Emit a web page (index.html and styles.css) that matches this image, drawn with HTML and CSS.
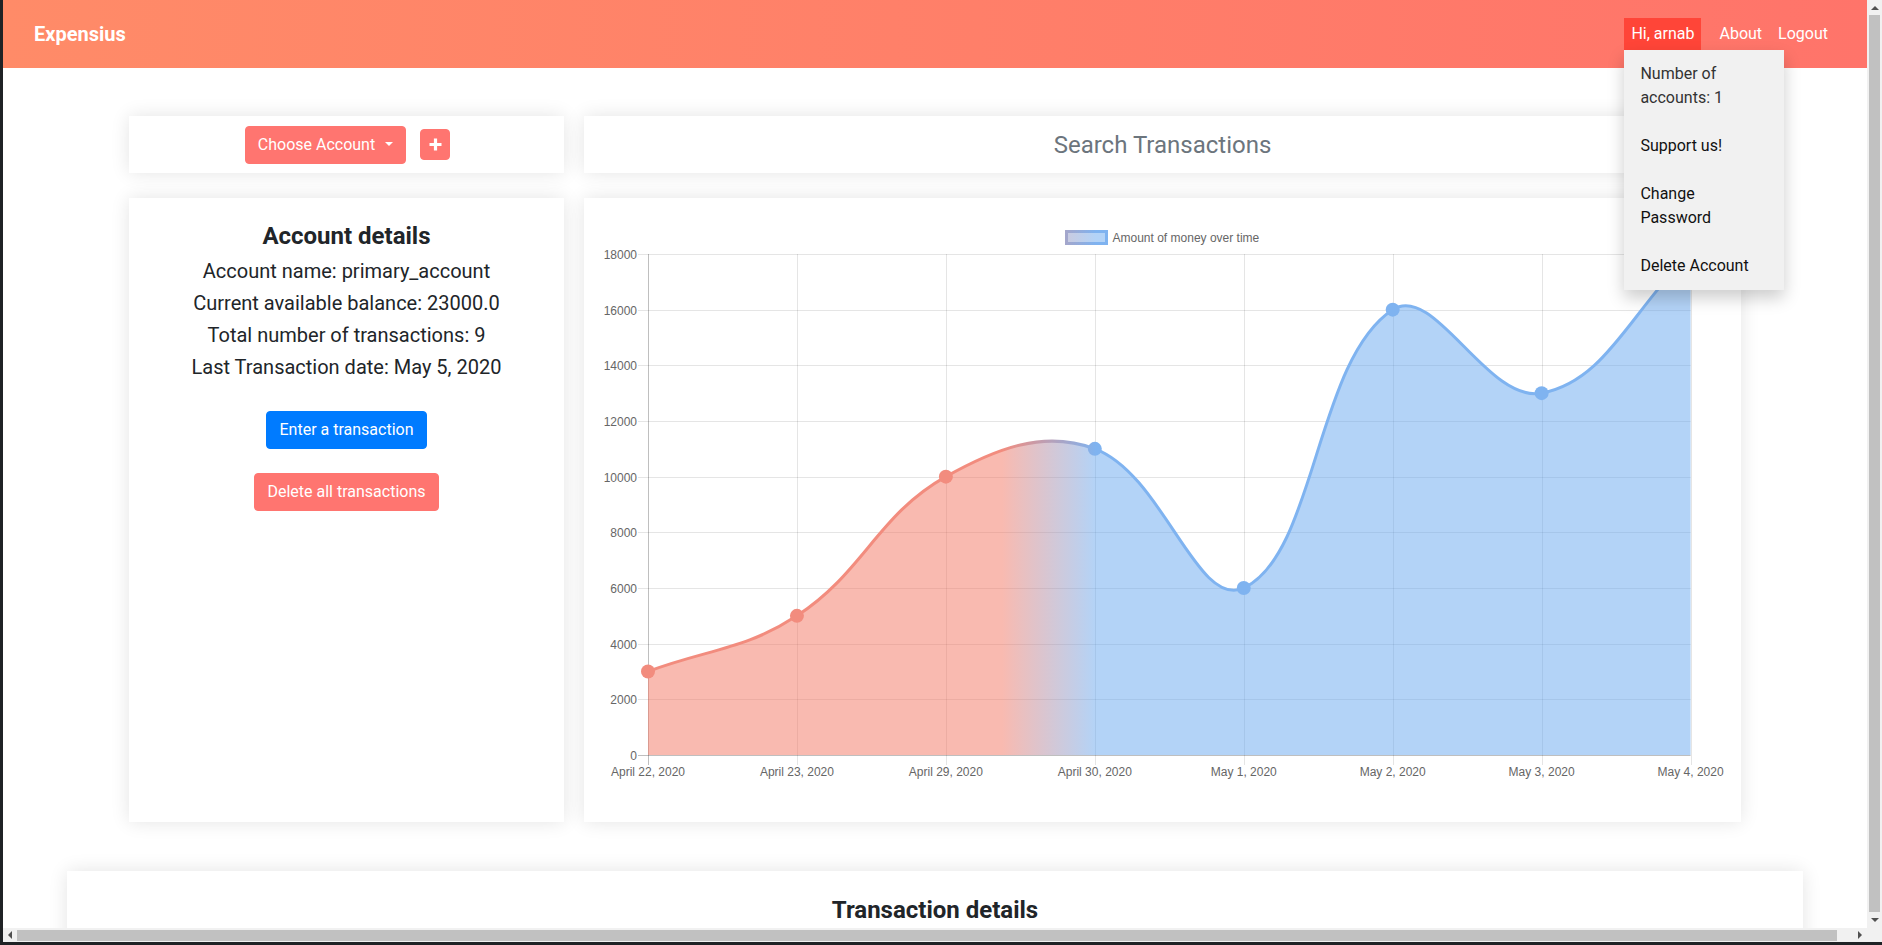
FILE: index.html
```html
<!DOCTYPE html>
<html lang="en">
<head>
<meta charset="utf-8">
<title>Expensius</title>
<link rel="stylesheet" href="styles.css">
</head>
<body>
<div class="page">
  <nav class="navbar">
    <a class="brand">Expensius</a>
    <ul class="nav">
      <li class="nav-item user">
        <a class="nav-link">Hi, arnab</a>
        <div class="menu">
          <a class="menu-item muted">Number of<br>accounts: 1</a>
          <a class="menu-item">Support us!</a>
          <a class="menu-item">Change<br>Password</a>
          <a class="menu-item">Delete Account</a>
        </div>
      </li>
      <li class="nav-item"><a class="nav-link">About</a></li>
      <li class="nav-item"><a class="nav-link">Logout</a></li>
    </ul>
  </nav>

  <main class="dashboard">
    <section class="card picker">
      <button class="btn btn-salmon">Choose Account<span class="caret"></span></button>
      <button class="btn btn-salmon btn-plus" aria-label="Add account">
        <svg width="13" height="13" viewBox="0 0 13 13"><path d="M6.5 0.5v12M0.5 6.5h12" stroke="#fff" stroke-width="3.2" fill="none"/></svg>
      </button>
    </section>

    <section class="card search">
      <input class="search-input" type="text" placeholder="Search Transactions">
    </section>

    <section class="card details">
      <h4 class="title">Account details</h4>
      <h5 class="line">Account name: primary_account</h5>
      <h5 class="line">Current available balance: 23000.0</h5>
      <h5 class="line">Total number of transactions: 9</h5>
      <h5 class="line">Last Transaction date: May 5, 2020</h5>
      <div class="actions">
        <button class="btn btn-primary">Enter a transaction</button>
        <button class="btn btn-salmon">Delete all transactions</button>
      </div>
    </section>

    <section class="card chart-card">
      <svg id="chart" class="chart" width="1157" height="624" viewBox="0 0 1157 624">
        <defs>
          <linearGradient id="fillGrad" gradientUnits="userSpaceOnUse" x1="418" y1="0" x2="512" y2="0">
            <stop offset="0" stop-color="#f37561" stop-opacity="0.5"/>
            <stop offset="1" stop-color="#67a7ef" stop-opacity="0.5"/>
          </linearGradient>
          <linearGradient id="lineGrad" gradientUnits="userSpaceOnUse" x1="418" y1="0" x2="512" y2="0">
            <stop offset="0" stop-color="#f28c7e"/>
            <stop offset="1" stop-color="#7fb3f0"/>
          </linearGradient>
        </defs>
        <g class="legend">
          <rect x="482.5" y="33.5" width="40" height="12" fill="url(#fillGrad)" stroke="url(#lineGrad)" stroke-width="3"/>
          <text x="528.5" y="43.5">Amount of money over time</text>
        </g>
        <g id="grid" class="grid"></g>
        <g id="axes" class="axes"></g>
        <path id="area" fill="url(#fillGrad)"/>
        <path id="line" fill="none" stroke="url(#lineGrad)" stroke-width="3"/>
        <g id="points" fill="url(#lineGrad)"></g>
        <g id="yLabels" text-anchor="end"></g>
        <g id="xLabels" text-anchor="middle"></g>
      </svg>
    </section>
  </main>

  <section class="card transactions">
    <h4 class="title">Transaction details</h4>
  </section>
</div>

<div class="vscroll">
  <div class="sb-btn"><span class="arrow arrow-up"></span></div>
  <div class="sb-track"><div class="sb-thumb"></div></div>
  <div class="sb-btn"><span class="arrow arrow-down"></span></div>
</div>
<div class="hscroll">
  <div class="sb-btn"><span class="arrow arrow-left"></span></div>
  <div class="sb-track"><div class="sb-thumb"></div></div>
  <div class="sb-btn"><span class="arrow arrow-right"></span></div>
</div>
<div class="sb-corner"></div>

<script src="script.js"></script>
</body>
</html>
```

FILE: styles.css
```css
* { box-sizing: border-box; }

html { height: 100%; overflow: hidden; background: #1f2225; }

body {
  margin: 0;
  height: 945px;
  overflow: hidden;
  display: grid;
  grid-template-columns: 3px 1864px 15px;
  grid-template-rows: 928px 14px 3px;
  background: #1f2225;
  font-family: Roboto, "Liberation Sans", Arial, sans-serif;
  font-size: 16px;
  line-height: 1.5;
  color: #212529;
}

.page {
  grid-column: 2;
  grid-row: 1;
  background: #fff;
  overflow: hidden;
}

/* ---------- navbar ---------- */
.navbar {
  display: flex;
  align-items: center;
  justify-content: space-between;
  height: 68px;
  padding: 0 31px;
  background: linear-gradient(to right, #ff8b68, #ff746a);
  position: relative;
  z-index: 5;
}

.brand {
  color: #fff;
  font-weight: 700;
  font-size: 20px;
  line-height: 30px;
}

.nav {
  display: flex;
  align-items: center;
  list-style: none;
  margin: 0;
  padding: 0;
}

.nav-link {
  display: block;
  padding: 4px 8px;
  line-height: 24px;
  color: #fff;
}

.user {
  position: relative;
  margin-right: 10px;
}

.user .nav-link {
  background: #ff4538;
  padding: 4px 7px;
}

.menu {
  position: absolute;
  top: 100%;
  left: 0;
  width: 160px;
  background: #f1f1f1;
  box-shadow: 0 8px 16px rgba(0, 0, 0, 0.2);
  z-index: 10;
}

.menu-item {
  display: block;
  padding: 12px 16px;
  line-height: 24px;
  color: #111;
}

.menu-item.muted { color: #333; }

/* ---------- cards ---------- */
.card {
  background: #fff;
  box-shadow: 0 0 18px rgba(0, 0, 0, 0.11);
}

.dashboard {
  display: grid;
  grid-template-columns: 435px 1157px;
  grid-template-rows: 57px 624px;
  gap: 25px 20px;
  width: 1612px;
  margin: 48px auto 0;
}

.picker {
  display: flex;
  align-items: center;
  justify-content: center;
  gap: 14px;
  padding-left: 2px;
}

.btn {
  font-family: inherit;
  font-size: 16px;
  line-height: 24px;
  padding: 6px 12px;
  border: 1px solid transparent;
  border-radius: 4px;
  color: #fff;
  cursor: pointer;
  display: inline-flex;
  align-items: center;
}

.btn-salmon { background: #ff7570; border-color: #ff7570; }
.btn-primary { background: #007bff; border-color: #007bff; }

.caret {
  display: inline-block;
  margin-left: 10px;
  border-top: 4.5px solid #fff;
  border-left: 4px solid transparent;
  border-right: 4px solid transparent;
  margin-top: -2px;
}

.btn-plus {
  width: 30px;
  height: 31px;
  padding: 0;
  justify-content: center;
}

.btn-plus svg { display: block; }

.search {
  display: flex;
  align-items: center;
}

.search-input {
  width: 100%;
  height: 57px;
  border: 0;
  padding: 0;
  background: transparent;
  font-family: inherit;
  font-size: 24px;
  text-align: center;
  color: #495057;
  outline: none;
}

.search-input::placeholder { color: #6c757d; opacity: 1; }

.details {
  text-align: center;
  padding: 24px 20px;
}

.title {
  margin: 0 0 8px;
  font-size: 24px;
  font-weight: 700;
  line-height: 1.2;
  color: #212529;
}

.line {
  margin: 0 0 8px;
  font-size: 20px;
  font-weight: 400;
  line-height: 1.2;
}

.actions {
  display: flex;
  flex-direction: column;
  align-items: center;
  gap: 24px;
  margin-top: 32px;
}

.chart-card { overflow: hidden; }

.chart { display: block; }

.chart text {
  font-family: "Liberation Sans", Arial, Helvetica, sans-serif;
  font-size: 12px;
  fill: #666;
}

.grid line { stroke: rgba(0, 0, 0, 0.1); stroke-width: 1; }
.axes line { stroke: rgba(0, 0, 0, 0.25); stroke-width: 1; }

.transactions {
  width: 1736px;
  min-height: 300px;
  margin: 49px auto 0;
  padding-top: 25px;
  text-align: center;
}

/* ---------- window scrollbars ---------- */
.vscroll, .hscroll {
  display: flex;
  background: #f1f1f1;
}

.vscroll { grid-column: 3; grid-row: 1; flex-direction: column; }
.hscroll { grid-column: 2; grid-row: 2; flex-direction: row; }

.sb-corner { grid-column: 3; grid-row: 2; background: #f1f1f1; }

.sb-btn {
  flex: 0 0 15px;
  display: flex;
  align-items: center;
  justify-content: center;
}

.vscroll .sb-btn:last-child { flex-basis: 16px; }
.hscroll .sb-btn:first-child { flex-basis: 14px; }

.sb-track { flex: 1; display: flex; }

.vscroll .sb-track { padding: 0 2px; }
.vscroll .sb-thumb { flex: 1; background: #c1c1c1; }

.hscroll .sb-track { padding: 2px 15px 1px 0; }
.hscroll .sb-thumb { flex: 1; background: #c1c1c1; }

.arrow { width: 0; height: 0; border: 4px solid transparent; }
.arrow-up { border-bottom-color: #505050; border-top-width: 0; }
.arrow-down { border-top-color: #505050; border-bottom-width: 0; }
.arrow-left { border-right-color: #505050; border-left-width: 0; }
.arrow-right { border-left-color: #505050; border-right-width: 0; }
```

FILE: script.js
```js
(function () {
  var NS = 'http://www.w3.org/2000/svg';
  var X0 = 64, STEP = 148.94, YT = 56, YB = 557, MAX = 18000, TICK = 2000;
  var labels = ['April 22, 2020', 'April 23, 2020', 'April 29, 2020', 'April 30, 2020',
                'May 1, 2020', 'May 2, 2020', 'May 3, 2020', 'May 4, 2020'];
  var values = [3000, 5000, 10000, 11000, 6000, 16000, 13000, 18000];

  function yOf(v) { return YB - v / MAX * (YB - YT); }
  function add(parent, name, attrs, text) {
    var e = document.createElementNS(NS, name);
    Object.keys(attrs).forEach(function (k) { e.setAttribute(k, attrs[k]); });
    if (text !== undefined) { e.textContent = text; }
    parent.appendChild(e);
    return e;
  }

  var grid = document.getElementById('grid');
  var axes = document.getElementById('axes');
  var yl = document.getElementById('yLabels');
  var xl = document.getElementById('xLabels');
  var xEnd = X0 + STEP * (labels.length - 1);

  for (var v = 0; v <= MAX; v += TICK) {
    var y = Math.round(yOf(v)) + 0.5;
    add(v === 0 ? axes : grid, 'line', { x1: X0 - 10, y1: y, x2: xEnd, y2: y });
    add(yl, 'text', { x: X0 - 11, y: y + 4 }, String(v));
  }
  labels.forEach(function (l, i) {
    var x = Math.round(X0 + i * STEP) + 0.5;
    add(i === 0 ? axes : grid, 'line', { x1: x, y1: YT, x2: x, y2: YB + 10 });
    add(xl, 'text', { x: X0 + i * STEP, y: YB + 21 }, l);
  });

  var pts = values.map(function (val, i) { return { x: X0 + i * STEP, y: yOf(val) }; });
  var t = 0.4, cps = [];
  function clampY(y) { return Math.max(YT, Math.min(YB, y)); }
  for (var i = 0; i < pts.length; i++) {
    var p0 = pts[i - 1] || pts[i], p1 = pts[i], p2 = pts[i + 1] || pts[i];
    var d01 = Math.sqrt(Math.pow(p1.x - p0.x, 2) + Math.pow(p1.y - p0.y, 2));
    var d12 = Math.sqrt(Math.pow(p2.x - p1.x, 2) + Math.pow(p2.y - p1.y, 2));
    var s01 = d01 / (d01 + d12), s12 = d12 / (d01 + d12);
    if (isNaN(s01)) { s01 = 0; }
    if (isNaN(s12)) { s12 = 0; }
    var fa = t * s01, fb = t * s12;
    cps.push({
      px: p1.x - fa * (p2.x - p0.x), py: clampY(p1.y - fa * (p2.y - p0.y)),
      nx: p1.x + fb * (p2.x - p0.x), ny: clampY(p1.y + fb * (p2.y - p0.y))
    });
  }
  var d = 'M' + pts[0].x.toFixed(2) + ' ' + pts[0].y.toFixed(2);
  for (var j = 1; j < pts.length; j++) {
    d += ' C' + cps[j - 1].nx.toFixed(2) + ' ' + cps[j - 1].ny.toFixed(2) + ' ' +
         cps[j].px.toFixed(2) + ' ' + cps[j].py.toFixed(2) + ' ' +
         pts[j].x.toFixed(2) + ' ' + pts[j].y.toFixed(2);
  }
  document.getElementById('line').setAttribute('d', d);
  var last = pts[pts.length - 1];
  document.getElementById('area').setAttribute('d',
    d + ' L' + last.x.toFixed(2) + ' ' + YB + ' L' + pts[0].x.toFixed(2) + ' ' + YB + ' Z');

  var pg = document.getElementById('points');
  pts.forEach(function (p) { add(pg, 'circle', { cx: p.x.toFixed(2), cy: p.y.toFixed(2), r: 7 }); });
})();
```
